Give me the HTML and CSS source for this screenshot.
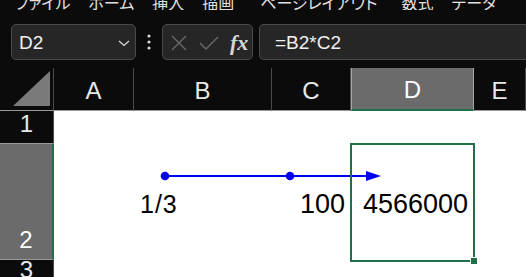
FILE: index.html
```html
<!DOCTYPE html>
<html lang="ja">
<head>
    <meta charset="UTF-8">
    <meta name="viewport" content="width=device-width, initial-scale=1.0">
    <title>Excel - 数式バー</title>
    <link rel="stylesheet" href="styles.css">
</head>
<body>
    <div class="menu">
        <span class="tab">ファイル</span>
        <span class="tab">ホーム</span>
        <span class="tab">挿入</span>
        <span class="tab">描画</span>
        <span class="tab">ページレイアウト</span>
        <span class="tab">数式</span>
        <span class="tab">データ</span>
    </div>

    <div class="formula-bar">
        <div class="name-box">
            <span>D2</span>
            <svg width="12" height="8" viewBox="0 0 12 8"><polyline points="1,2 6,6.5 11,2" fill="none" stroke="#d8d8d8" stroke-width="1.3"/></svg>
        </div>
        <div class="dots">
            <svg width="6" height="16" viewBox="0 0 6 16"><circle cx="3" cy="2" r="1.6"/><circle cx="3" cy="8" r="1.6"/><circle cx="3" cy="14" r="1.6"/></svg>
        </div>
        <div class="fx-box">
            <svg width="16" height="16" viewBox="0 0 16 16"><path d="M1 1 L15 15 M15 1 L1 15" stroke="#6b6b6b" stroke-width="1.4"/></svg>
            <svg width="20" height="14" viewBox="0 0 20 14"><polyline points="1,7 7,13 19,1" fill="none" stroke="#6b6b6b" stroke-width="1.4"/></svg>
            <span class="fx">fx</span>
        </div>
        <div class="formula-input">=B2*C2</div>
    </div>

    <div class="sheet">
        <div class="corner">
            <svg width="37" height="35" viewBox="0 0 37 35"><polygon points="0,35 37,35 37,0" fill="#7a7a7a"/></svg>
        </div>
        <div class="col-head">A</div>
        <div class="col-head">B</div>
        <div class="col-head">C</div>
        <div class="col-head active">D</div>
        <div class="col-head">E</div>

        <div class="row-head">1</div>
        <div class="cell"></div>
        <div class="cell"></div>
        <div class="cell"></div>
        <div class="cell"></div>
        <div class="cell"></div>

        <div class="row-head active">2</div>
        <div class="cell"></div>
        <div class="cell value frac">1/3</div>
        <div class="cell value num">100</div>
        <div class="cell value num">4566000</div>
        <div class="cell"></div>

        <div class="row-head last">3</div>
        <div class="cell"></div>
        <div class="cell"></div>
        <div class="cell"></div>
        <div class="cell"></div>
        <div class="cell"></div>

        <!-- drawn shape on the sheet -->
        <svg class="drawing" width="526" height="209" viewBox="0 0 526 209">
            <line x1="165" y1="108" x2="368" y2="108" stroke="#0000f0" stroke-width="2"/>
            <polygon points="366,103 381,108 366,113" fill="#0000f0"/>
            <circle cx="165" cy="108" r="4.3" fill="#0000f0"/>
            <circle cx="290" cy="108" r="4.3" fill="#0000f0"/>
        </svg>

        <div class="selection"></div>
        <div class="fill-handle"></div>
    </div>
</body>
</html>
```

FILE: styles.css
```css
body {
    margin: 0;
    background-color: #0b0b0b;
    font-family: 'Liberation Sans', Arial, sans-serif;
    color: #e6e6e6;
    overflow: hidden;
    width: 526px;
    height: 277px;
}

.menu {
    height: 10px;
    overflow: hidden;
    display: flex;
    align-items: flex-end;
    gap: 18px;
    padding-left: 15px;
    font-family: 'Noto Sans CJK JP', sans-serif;
    font-feature-settings: "palt";
    font-size: 16px;
    line-height: 16px;
    color: #e0e0e0;
    white-space: nowrap;
}

.menu .tab:nth-child(5) {
    margin-left: 8px;
    margin-right: 6px;
}

.formula-bar {
    margin-top: 14px;
    height: 36px;
    display: flex;
    align-items: stretch;
}

.name-box {
    margin-left: 11px;
    width: 125px;
    box-sizing: border-box;
    border: 1px solid #4a4a4a;
    border-radius: 5px;
    background-color: #262626;
    display: flex;
    align-items: center;
    justify-content: space-between;
    padding: 2px 5px 0 7px;
    font-size: 19px;
    color: #f0f0f0;
}

.dots {
    width: 26px;
    display: flex;
    align-items: center;
    justify-content: center;
    fill: #d8d8d8;
}

.fx-box {
    width: 91px;
    box-sizing: border-box;
    border: 1px solid #4a4a4a;
    border-radius: 5px;
    background-color: #262626;
    display: flex;
    align-items: center;
    padding: 1px 0 0 8px;
    gap: 12px;
}

.fx {
    font-family: 'Liberation Serif', 'Times New Roman', serif;
    font-style: italic;
    font-weight: bold;
    font-size: 22px;
    color: #d6d6d6;
    margin-left: -1px;
}

.formula-input {
    flex: 1;
    margin-left: 6px;
    box-sizing: border-box;
    border: 1px solid #4a4a4a;
    border-right: none;
    border-radius: 5px 0 0 5px;
    background-color: #262626;
    display: flex;
    align-items: center;
    padding: 2px 0 0 15px;
    font-size: 19px;
    color: #f0f0f0;
}

.sheet {
    margin-top: 8px;
    position: relative;
    display: grid;
    grid-template-columns: 54px 80px 138px 79px 123px 1fr;
    grid-template-rows: 43px 33px 116px 17px;
    overflow: hidden;
}

.corner {
    border-right: 1px solid #4a4a4a;
    border-bottom: 1px solid #9a9a9a;
    display: flex;
    align-items: flex-end;
    justify-content: flex-end;
    padding: 0 3px 4px 0;
}

.col-head {
    border-right: 1px solid #4a4a4a;
    border-bottom: 1px solid #9a9a9a;
    display: flex;
    align-items: center;
    justify-content: center;
    padding-top: 3px;
    font-size: 24px;
    color: #e8e8e8;
}

.col-head.active {
    background-color: #6b6b6b;
    border-left: 1px solid #a8a8a8;
    border-right: 1px solid #a8a8a8;
    border-bottom: 2px solid #21704a;
    color: #ffffff;
}

.row-head {
    border-right: 1px solid #4a4a4a;
    border-bottom: 1px solid #9a9a9a;
    display: flex;
    align-items: flex-end;
    justify-content: center;
    padding-bottom: 5px;
    font-size: 24px;
    color: #e8e8e8;
}

.row-head.active {
    background-color: #6b6b6b;
    border-right: 2px solid #21704a;
    color: #ffffff;
}

.row-head.last {
    align-items: flex-start;
    padding-bottom: 0;
    line-height: 20px;
    border-bottom: none;
}

.cell {
    background-color: #ffffff;
}

.value {
    display: flex;
    align-items: center;
    padding-top: 4px;
    color: #000000;
    font-size: 27px;
}

.frac {
    padding-left: 6px;
    font-size: 25px;
    letter-spacing: 1px;
}

.num {
    justify-content: flex-end;
    padding-right: 6px;
}

.drawing {
    position: absolute;
    left: 0;
    top: 0;
    pointer-events: none;
}

.selection {
    position: absolute;
    left: 350px;
    top: 75px;
    width: 125px;
    height: 119px;
    box-sizing: border-box;
    border: 2px solid #21704a;
}

.fill-handle {
    position: absolute;
    left: 471px;
    top: 190px;
    width: 6px;
    height: 6px;
    background-color: #21704a;
    box-shadow: 0 0 0 1px #ffffff;
}
```
